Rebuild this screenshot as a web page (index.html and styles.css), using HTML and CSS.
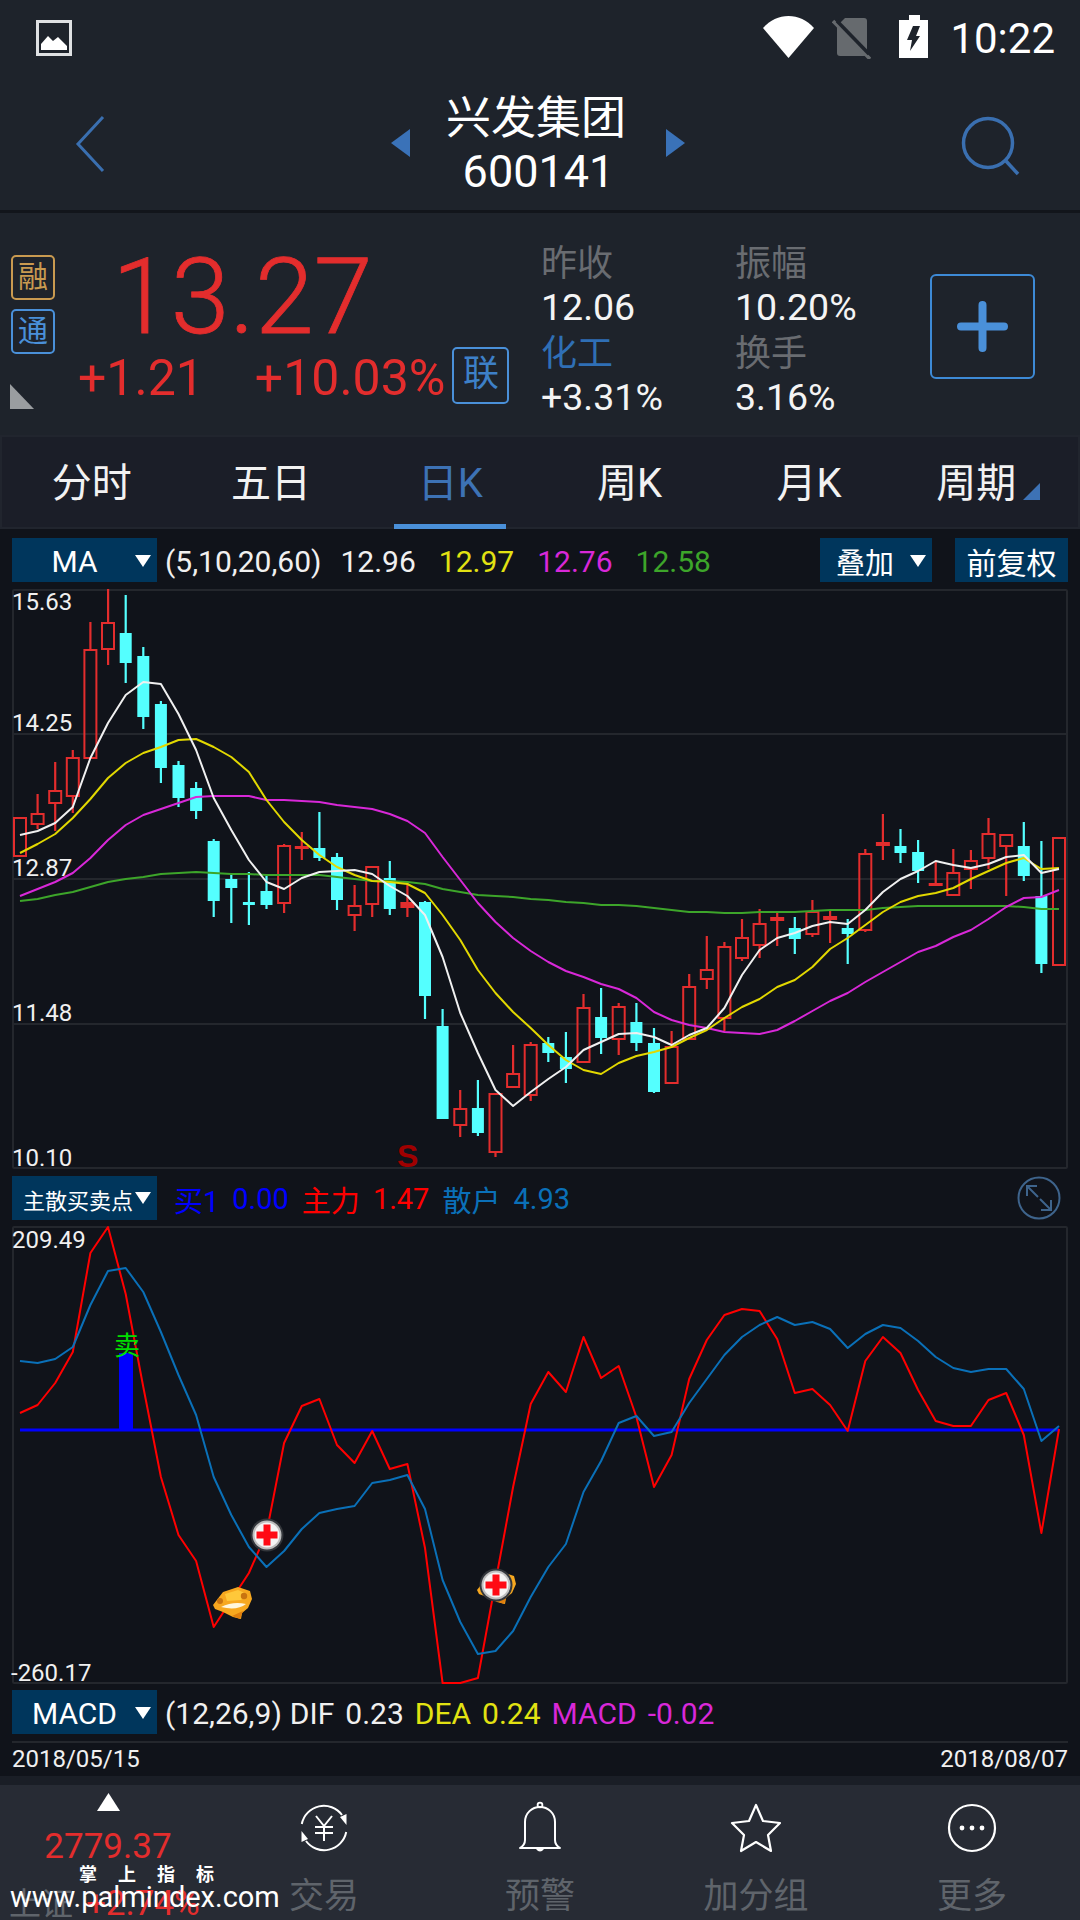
FILE: index.html
```html
<!DOCTYPE html>
<html lang="zh">
<head>
<meta charset="utf-8">
<title>兴发集团 600141</title>
<link rel="stylesheet" href="styles.css">
</head>
<body>
<div class="page">
  <div class="top">
    <div class="status">
      <svg class="st-image" width="36" height="36" viewBox="0 0 36 36"><rect x="1.5" y="1.5" width="33" height="33" fill="none" stroke="#dfe1e3" stroke-width="3"/><path d="M5 30V24L12 16L17 21L22 17L31 26V30Z" fill="#fff"/></svg>
      <svg class="st-wifi" width="51" height="42" viewBox="0 0 51 42"><path d="M25.5 42L0 12C7 4 16 0 25.5 0S44 4 51 12Z" fill="#fff"/></svg>
      <svg class="st-sim" width="39" height="41" viewBox="0 0 39 41"><path d="M13 0H32Q35 0 35 3V35Q35 38 32 38H8Q5 38 5 35V8Z" fill="#666a6e"/><path d="M1 3L38 41" stroke="#666a6e" stroke-width="3.5"/><path d="M5 3L37 36" stroke="#1e232b" stroke-width="3.5"/></svg>
      <svg class="st-batt" width="29" height="43" viewBox="0 0 29 43"><path d="M10 0H21V5H29V43H0V5H10Z" fill="#fff"/><path d="M14 11H21L17 21H21L11 36L13 25H8Z" fill="#1e232b"/></svg>
      <span class="st-time">10:22</span>
    </div>
    <div class="nav">
      <svg class="nav-back" width="33" height="60" viewBox="0 0 33 60"><path d="M29 3L4 30L29 57" fill="none" stroke="#3a6fb0" stroke-width="3"/></svg>
      <div class="nav-mid">
        <svg class="nav-tri" width="19" height="28" viewBox="0 0 19 28"><path d="M19 0V28L0 14Z" fill="#3a72b8"/></svg>
        <div class="nav-title"><div class="nav-name">兴发集团</div><div class="nav-code">600141</div></div>
        <svg class="nav-tri" width="19" height="28" viewBox="0 0 19 28"><path d="M0 0V28L19 14Z" fill="#3a72b8"/></svg>
      </div>
      <svg class="nav-search" width="62" height="62" viewBox="0 0 62 62"><circle cx="27" cy="27" r="24.5" fill="none" stroke="#3a6fb0" stroke-width="3.5"/><path d="M45 45L57 58" stroke="#3a6fb0" stroke-width="3.5"/></svg>
    </div>
    <div class="quote">
      <div class="badges">
        <span class="badge badge-gold">融</span>
        <span class="badge badge-blue">通</span>
        <svg class="corner" width="24" height="25" viewBox="0 0 24 25"><path d="M0 0L24 25H0Z" fill="#9a9da0"/></svg>
      </div>
      <div class="price">
        <div class="price-main">13.27</div>
        <div class="price-sub">
          <span class="chg">+1.21</span>
          <span class="pct">+10.03%</span>
          <span class="lian">联</span>
        </div>
      </div>
      <div class="stats">
        <span class="s-label">昨收</span><span class="s-label">振幅</span>
        <span class="s-val">12.06</span><span class="s-val">10.20%</span>
        <span class="s-label s-blue">化工</span><span class="s-label">换手</span>
        <span class="s-val">+3.31%</span><span class="s-val">3.16%</span>
      </div>
      <div class="plus"><svg width="51" height="51" viewBox="0 0 51 51"><path d="M25.5 4V47M4 25.5H47" stroke="#4a90d9" stroke-width="8" stroke-linecap="round"/></svg></div>
    </div>
  </div>

  <div class="tabs">
    <div class="tab">分时</div>
    <div class="tab">五日</div>
    <div class="tab tab-on">日K</div>
    <div class="tab">周K</div>
    <div class="tab">月K</div>
    <div class="tab tab-more">周期<svg class="tab-corner" width="17" height="17" viewBox="0 0 17 17"><path d="M17 0V17H0Z" fill="#3d72b5"/></svg></div>
  </div>

  <div class="charts">
    <div class="legend legend-ma">
      <div class="sel"><span class="sel-text">MA</span><i class="caret"></i></div>
      <span class="t-white ma-params">(5,10,20,60)</span>
      <span class="t-white">12.96</span>
      <span class="t-yellow">12.97</span>
      <span class="t-magenta">12.76</span>
      <span class="t-green">12.58</span>
      <div class="legend-right">
        <div class="sel sel-add"><span>叠加</span><i class="caret"></i></div>
        <div class="sel sel-adj">前复权</div>
      </div>
    </div>
    <div class="panel panel-k">
      <svg id="kline" class="plot" width="1056" height="581" viewBox="12 589 1056 581"></svg>
      <span class="axis ax-1">15.63</span>
      <span class="axis ax-2">14.25</span>
      <span class="axis ax-3">12.87</span>
      <span class="axis ax-4">11.48</span>
      <span class="axis ax-5">10.10</span>
      <span class="mark-s">S</span>
    </div>
    <div class="legend legend-vol">
      <div class="sel sel-small"><span>主散买卖点</span><i class="caret"></i></div>
      <span class="t-blue">买1</span>
      <span class="t-blue">0.00</span>
      <span class="t-red">主力</span>
      <span class="t-red">1.47</span>
      <span class="t-sky">散户</span>
      <span class="t-sky">4.93</span>
      <svg class="expand" width="44" height="44" viewBox="0 0 44 44"><circle cx="22" cy="22" r="20.5" fill="none" stroke="#3e648c" stroke-width="2"/><path d="M10 20V10H20M10 10L21 21M34 24V34H24M34 34L23 23" fill="none" stroke="#3e648c" stroke-width="2"/></svg>
    </div>
    <div class="panel panel-ind">
      <svg id="indicator" class="plot" width="1056" height="458" viewBox="12 1226 1056 458"></svg>
      <span class="axis ax-6">209.49</span>
      <span class="axis ax-7">-260.17</span>
      <span class="mark-sell">卖</span>
    </div>
    <div class="legend legend-macd">
      <div class="sel"><span class="sel-text">MACD</span><i class="caret"></i></div>
      <span class="t-white macd-params">(12,26,9)</span>
      <span class="t-white">DIF</span>
      <span class="t-white">0.23</span>
      <span class="t-yellow">DEA</span>
      <span class="t-yellow">0.24</span>
      <span class="t-magenta">MACD</span>
      <span class="t-magenta">-0.02</span>
    </div>
    <div class="dates"><span>2018/05/15</span><span>2018/08/07</span></div>
  </div>
  <div class="gapbar"></div>

  <div class="foot">
    <div class="foot-item foot-index">
      <svg class="foot-up" width="23" height="18" viewBox="0 0 23 18"><path d="M11.5 0L23 18H0Z" fill="#fff"/></svg>
      <div class="idx-price">2779.37</div>
      <div class="idx-row"><span class="idx-name">上证</span><span class="idx-chg">+2.74%</span></div>
    </div>
    <div class="foot-item">
      <svg class="foot-icon" width="50" height="50" viewBox="0 0 50 50"><path d="M2.8 21A22.5 22.5 0 0 1 43 12M47.2 29A22.5 22.5 0 0 1 7 38" fill="none" stroke="#fff" stroke-width="2"/><path d="M47.5 11V22L41 14ZM2.5 39V28L9 36Z" fill="#fff"/><path d="M17 13L25 23L33 13M25 23V38M16 24H34M16 30H34" fill="none" stroke="#fff" stroke-width="2"/></svg>
      <span class="foot-label">交易</span>
    </div>
    <div class="foot-item">
      <svg class="foot-icon" width="50" height="50" viewBox="0 0 50 50"><path d="M5 45Q10 42 10 37V19C10 10 17 4 25 4S40 10 40 19V37Q40 42 45 45Z" fill="none" stroke="#fff" stroke-width="2" stroke-linejoin="round"/><circle cx="25" cy="2" r="2.4" fill="none" stroke="#fff" stroke-width="1.8"/><path d="M21 46Q25 51 29 46Z" fill="#fff"/></svg>
      <span class="foot-label">预警</span>
    </div>
    <div class="foot-item">
      <svg class="foot-icon" width="50" height="50" viewBox="0 0 50 50"><path d="M25 2L32 18L49 20L37 32L40 48L25 39L10 48L13 32L1 20L18 18Z" fill="none" stroke="#fff" stroke-width="2.2" stroke-linejoin="round"/></svg>
      <span class="foot-label">加分组</span>
    </div>
    <div class="foot-item">
      <svg class="foot-icon" width="50" height="50" viewBox="0 0 50 50"><circle cx="25" cy="25" r="23" fill="none" stroke="#fff" stroke-width="2.2"/><circle cx="15" cy="25" r="2.4" fill="#fff"/><circle cx="25" cy="25" r="2.4" fill="#fff"/><circle cx="35" cy="25" r="2.4" fill="#fff"/></svg>
      <span class="foot-label">更多</span>
    </div>
    <div class="watermark"><div class="wm-cn">掌上指标</div><div class="wm-url">www.palmindex.com</div></div>
  </div>
</div>
<script src="chart.js"></script>
</body>
</html>
```
FILE: styles.css
```css
* { box-sizing: border-box; }
html, body { margin: 0; padding: 0; background: #10131a; }
body { font-family: Roboto, "Noto Sans CJK SC", sans-serif; color: #fff; }
.page { width: 1080px; height: 1920px; overflow: hidden; display: flex; flex-direction: column; }

.top { background: #1e232b; flex: none; }
.status { height: 75px; display: flex; align-items: flex-start; position: relative; }
.st-image { margin: 20px 0 0 36px; }
.st-wifi { margin: 16px 0 0 auto; }
.st-sim { margin: 18px 0 0 18px; }
.st-batt { margin: 15px 0 0 28px; }
.st-time { margin: 15px 25px 0 22px; font-size: 42px; line-height: 48px; }

.nav { height: 138px; display: flex; align-items: flex-start; border-bottom: 3px solid #12151b; position: relative; }
.nav-back { margin: 39px 0 0 74px; }
.nav-mid { margin: 0 0 0 284px; width: 294px; display: flex; align-items: center; justify-content: space-between; height: 115px; padding-top: 20px; }
.nav-title { text-align: center; margin-left: -4px; }
.nav-name { font-size: 45px; line-height: 50px; margin-top: 7px; }
.nav-code { font-size: 45px; line-height: 52px; margin-top: 2px; padding-left: 5px; }
.nav-tri { margin-top: 0; }
.nav-search { margin: 41px 0 0 276px; }

.quote { height: 222px; display: flex; }
.badges { width: 67px; padding: 42px 0 0 11px; display: flex; flex-direction: column; align-items: flex-start; flex: none; }
.badge { width: 44px; height: 45px; border: 2px solid; border-radius: 5px; font-size: 30px; line-height: 39px; text-align: center; }
.badge-gold { color: #c99a50; border-color: #c99a50; }
.badge-blue { color: #4a90d9; border-color: #4a90d9; margin-top: 9px; }
.corner { margin: 30px 0 0 -1px; }
.price { width: 452px; padding: 0 0 0 11px; color: #e32d2d; flex: none; }
.price-main { font-size: 106px; line-height: 120px; padding: 24px 0 0 34px; height: 134px; font-weight: 300; -webkit-text-stroke: 0.8px #e32d2d; }
.price-sub { display: flex; align-items: center; height: 62px; font-size: 50px; }
.pct { margin-left: 51px; }
.lian { margin: -6px 0 0 7px; width: 57px; height: 57px; border: 2px solid #4a90d9; border-radius: 5px; color: #3d80c8; font-size: 36px; line-height: 51px; text-align: center; }
.stats { width: 378px; padding: 27px 0 0 22px; display: grid; grid-template-columns: 194px 1fr; grid-auto-rows: 45px; align-items: center; height: 210px; flex: none; }
.stats span { line-height: 45px; }
.s-label { font-size: 36px; color: #696c71; padding-top: 4px; }
.s-blue { color: #2f6fb5; }
.s-val { font-size: 37.5px; color: #f4f4f4; }
.plus { width: 105px; height: 105px; margin: 61px 0 0 33px; border: 2px solid #3d8ad6; border-radius: 6px; display: flex; align-items: center; justify-content: center; flex: none; }

.tabs { height: 94px; background: #1b1e28; border: 2px solid #21252e; display: grid; grid-template-columns: repeat(6, 1fr); flex: none; }
.tab { display: flex; align-items: center; justify-content: center; font-size: 40px; position: relative; padding-bottom: 4px; color: #f2f2f2; }
.tab-on { color: #3d72b5; }
.tab-on::after { content: ""; position: absolute; left: 33px; right: 34px; bottom: -2px; height: 5px; background: #4a90d9; }
.tab-more { padding-right: 24px; }
.tab-corner { position: absolute; left: 124px; top: 46px; }

.charts { background: #10131a; flex: 1; padding-top: 9px; }
.legend { height: 44px; padding: 0 12px; display: flex; align-items: center; font-size: 30px; white-space: nowrap; }
.legend > span { padding-top: 2px; }
.sel { height: 44px; background: #00365c; color: #fff; display: flex; align-items: center; position: relative; padding-top: 2px; }
.legend > .sel:first-child { width: 145px; flex: none; }
.sel-text { width: 125px; text-align: center; }
.caret { position: absolute; width: 0; height: 0; border-left: 8.5px solid transparent; border-right: 8.5px solid transparent; border-top: 12px solid #fff; left: 123px; top: 17px; }
.legend-ma { gap: 23px; }
.legend-ma > .sel:first-child { margin-right: -15px; }
.ma-params { margin-right: -4px; }
.legend-right { margin-left: auto; display: flex; gap: 23px; }
.sel-add { width: 112px; padding-left: 16px; font-size: 29px; }
.sel-add .caret { left: 90px; }
.sel-adj { width: 113px; justify-content: center; font-size: 30px; }
.t-white { color: #f0f0f0; }
.t-yellow { color: #e2e212; }
.t-magenta { color: #d828d8; }
.t-green { color: #3da52a; }
.t-blue { color: #0000ff; }
.t-red { color: #ff0000; }
.t-sky { color: #0a70b8; }

.panel { width: 1056px; margin: 7px 0 0 12px; position: relative; border: 2px solid #24272d; border-radius: 2px; }
.panel-k { height: 580px; }
.plot { position: absolute; left: -2px; top: -2px; display: block; overflow: visible; }
.axis { position: absolute; left: -2px; font-size: 24px; line-height: 24px; color: #f0f0f0; }
.ax-1 { top: -1px; }
.ax-2 { top: 120px; }
.ax-3 { top: 265px; }
.ax-4 { top: 410px; }
.ax-5 { top: 555px; }
.ax-6 { top: 0; }
.ax-7 { top: 433px; left: -3px; }
.mark-s { position: absolute; left: 383px; top: 548px; font-family: "Liberation Sans", sans-serif; font-weight: 700; font-size: 32px; line-height: 34px; color: #a00000; }
.mark-sell { position: absolute; left: 100px; top: 104px; font-size: 26px; line-height: 28px; color: #00e000; }

.legend-vol { gap: 13px; font-size: 29px; position: relative; margin-top: 7px; }
.legend-vol > .sel { margin-right: 4px; }
.sel-small { font-size: 22px; padding-left: 11px; }
.sel-small .caret { left: 123px; top: 16px; }
.expand { position: absolute; left: 1017px; top: 0; }
.panel-ind { height: 458px; margin-top: 6px; }
.legend-macd { gap: 11px; margin-top: 6px; font-size: 30px; }
.legend-macd > .sel { margin-right: -3px; }
.macd-params { margin-right: -3px; }
.dates { margin: 7px 12px 0; border-top: 2px solid #24272d; display: flex; justify-content: space-between; font-size: 24px; line-height: 28px; padding-top: 2px; color: #f0f0f0; }
.gapbar { height: 9px; background: #1a1e26; flex: none; }

.foot { height: 135px; background: #272b34; display: grid; grid-template-columns: repeat(5, 216px); position: relative; flex: none; overflow: hidden; }
.foot-item { display: flex; flex-direction: column; align-items: center; padding-top: 18px; }
.foot-label { font-size: 35px; line-height: 40px; color: #5f646b; margin-top: 24px; }
.foot-icon { display: block; overflow: visible; }
.foot-index { padding-top: 8px; }
.idx-price { font-size: 35px; line-height: 40px; color: #e32d2d; margin-top: 16px; }
.idx-row { display: flex; align-items: baseline; line-height: 40px; margin-top: 17px; width: 216px; padding-left: 9px; gap: 13px; }
.idx-name { color: #5f646b; font-size: 32px; }
.idx-chg { color: #e32d2d; font-size: 35px; }
.watermark { position: absolute; left: 10px; top: 78px; width: 270px; line-height: 1; }
.wm-cn { font-size: 18px; line-height: 24px; font-weight: 700; letter-spacing: 21px; padding-left: 69px; color: #fff; white-space: nowrap; }
.wm-url { font-size: 29px; line-height: 26px; margin-top: -3px; color: #fff; }
```
FILE: chart.js
```js
var X = function (i) { return 20 + 17.61 * i; };
var RED = "#e32d2d", CYAN = "#54ffff";

// colour, high, body top, body bottom, low (page pixels)
var candles = [
  ["r",817,817,857,857],["r",794,813,825,829],["r",762,790,804,831],["r",750,757,797,813],
  ["r",622,649,759,759],["r",589,622,650,665],["c",595,633,663,683],["c",647,656,717,729],
  ["c",701,704,768,783],["c",761,765,798,807],["c",782,788,811,819],["c",839,841,901,917],
  ["c",875,879,888,923],["c",872,902,904,925],["c",876,891,905,909],["r",844,845,904,913],
  ["r",832,846,848,860],["c",812,848,858,861],["c",853,857,900,910],["r",885,905,916,931],
  ["r",866,866,905,917],["c",861,878,909,915],["r",883,902,908,917],["c",901,902,996,1019],
  ["c",1009,1026,1119,1119],["r",1090,1108,1126,1137],["c",1080,1108,1133,1136],["r",1093,1093,1153,1157],
  ["r",1045,1073,1088,1088],["r",1042,1044,1096,1101],["c",1037,1043,1053,1062],["c",1032,1057,1069,1083],
  ["r",994,1007,1063,1063],["c",988,1017,1038,1054],["r",1003,1006,1040,1055],["c",1003,1022,1043,1051],
  ["c",1028,1043,1092,1093],["r",1031,1046,1084,1084],["r",974,986,1040,1040],["r",936,969,980,989],
  ["r",942,946,1019,1031],["r",919,937,959,961],["r",909,923,946,958],["r",913,917,921,946],
  ["c",917,928,939,954],["r",900,911,935,937],["r",911,916,920,943],["c",919,928,934,964],
  ["r",849,853,931,932],["r",814,842,846,860],["c",829,846,853,863],["c",840,852,871,883],
  ["r",861,883,885,886],["r",849,872,896,896],["r",850,860,870,889],["r",818,833,859,869],
  ["r",834,834,847,896],["c",822,846,876,881],["c",841,896,964,973],["r",837,837,966,966]
];

var ma5 = [835,831,823,807,758,723,695,682,684,714,750,798,830,860,882,889,878,872,871,870,874,886,896,915,957,1013,1053,1090,1106,1092,1079,1067,1050,1042,1034,1033,1037,1045,1035,1028,1008,975,950,938,933,926,922,924,910,892,879,871,861,865,868,864,857,855,873,869];
var ma10 = [853,844,834,818,799,778,763,753,747,740,739,747,757,772,800,822,840,855,867,875,881,882,884,893,915,940,970,993,1012,1028,1045,1060,1070,1074,1063,1056,1052,1047,1038,1030,1018,1007,999,987,980,967,949,938,925,912,902,896,893,888,879,871,863,858,869,868];
var ma20 = [896,889,882,873,858,840,825,815,809,803,797,796,796,796,800,800,801,802,805,807,809,814,821,833,857,880,903,922,938,951,962,971,977,984,989,998,1012,1020,1025,1028,1032,1033,1034,1030,1021,1011,1001,993,982,972,962,952,946,937,930,919,907,898,897,890];
var ma60 = [901,899,895,892,887,882,879,877,874,873,872,873,874,874,875,875,875,875,877,879,881,881,882,884,889,892,895,896,897,899,900,902,903,905,905,906,908,910,912,912,913,913,912,912,912,911,910,910,910,908,907,906,906,906,906,906,906,907,909,909];

var zhuli = [1413,1405,1383,1352,1253,1227,1294,1387,1477,1535,1561,1627,1600,1573,1533,1443,1406,1399,1445,1463,1431,1469,1464,1548,1683,1683,1678,1582,1487,1404,1372,1392,1337,1378,1366,1417,1487,1455,1379,1340,1315,1309,1311,1339,1393,1389,1405,1431,1361,1337,1353,1390,1421,1426,1426,1400,1393,1435,1533,1429];
var sanhu = [1361,1363,1359,1347,1305,1271,1268,1292,1332,1375,1415,1477,1515,1547,1567,1551,1529,1513,1509,1506,1483,1480,1475,1509,1580,1622,1654,1651,1631,1597,1567,1544,1492,1461,1423,1416,1436,1432,1403,1379,1355,1337,1325,1317,1325,1322,1329,1348,1334,1325,1328,1341,1357,1368,1372,1369,1369,1389,1441,1426];

function line(vals, color, w) {
  var pts = vals.map(function (y, i) { return X(i).toFixed(1) + "," + y; }).join(" ");
  return '<polyline fill="none" stroke-linejoin="round" points="' + pts + '" stroke="' + color + '" stroke-width="' + w + '"/>';
}
function rect(x, y, w, h, fill, extra) {
  return '<rect x="' + x + '" y="' + y + '" width="' + w + '" height="' + h + '" fill="' + fill + '"' + (extra || "") + "/>";
}
function hline(y) { return rect(12, y - 1, 1056, 2, "#24272d"); }

function candle(c, i) {
  var x = X(i), col = c[0] === "r" ? RED : CYAN, s = "";
  var wick = 2.2;
  if (c[1] < c[2]) s += rect((x - wick / 2).toFixed(1), c[1], wick, c[2] - c[1], col);
  if (c[4] > c[3]) s += rect((x - wick / 2).toFixed(1), c[3], wick, c[4] - c[3], col);
  var h = c[3] - c[2];
  if (c[0] === "r" && h > 6) {
    s += rect((x - 6).toFixed(1), c[2] + 1, 12, h - 2, "none", ' stroke="' + RED + '" stroke-width="2"');
  } else {
    var w = c[0] === "r" ? 14 : 12;
    s += rect((x - w / 2).toFixed(1), c[2], w, Math.max(h, 3), col);
  }
  return s;
}

function disc(cx, cy) {
  return '<circle cx="' + cx + '" cy="' + cy + '" r="16.5" fill="#33363b"/>' +
    '<circle cx="' + cx + '" cy="' + cy + '" r="14.5" fill="#bdbdbd"/>' +
    '<circle cx="' + cx + '" cy="' + cy + '" r="12.5" fill="#f4f4f4"/>' +
    rect(cx - 10.5, cy - 3.5, 21, 7, "#ff0a14") + rect(cx - 3.5, cy - 10.5, 7, 21, "#ff0a14");
}
function gem(x, y) {
  return '<g transform="translate(' + x + ' ' + y + ')">' +
    '<path d="M0 18L10 5L25 0L37 4L39 12L35 21L29 26L28 32L20 30L10 25L2 22Z" fill="#f7a81f"/>' +
    '<path d="M12 7L25 3L34 7L28 13L14 14Z" fill="#ffc83a"/>' +
    '<circle cx="7" cy="14" r="3" fill="#c97410"/><circle cx="31" cy="9" r="3.2" fill="#c97410"/>' +
    '<path d="M8 20Q20 14 33 17Q24 24 8 20Z" fill="#fff6dc"/>' +
    '<path d="M19 29L27 32L30 24Z" fill="#e07f0e"/></g>';
}

var k = hline(734) + hline(879) + hline(1024);
k += candles.map(candle).join("");
k += line(ma60, "#3da52a", 2) + line(ma20, "#d828d8", 2) + line(ma10, "#e2d800", 2) + line(ma5, "#f0f0f0", 2);
document.getElementById("kline").innerHTML = k;

var ind = rect(119, 1353, 14, 77, "#0000ff") + rect(20, 1428.5, 1039, 3, "#0000ff");
ind += line(zhuli, "#ff0000", 2) + line(sanhu, "#0a70b8", 2);
ind += gem(213, 1587) + disc(267, 1535) + gem(477, 1572) + disc(496, 1585);
document.getElementById("indicator").innerHTML = ind;
```
